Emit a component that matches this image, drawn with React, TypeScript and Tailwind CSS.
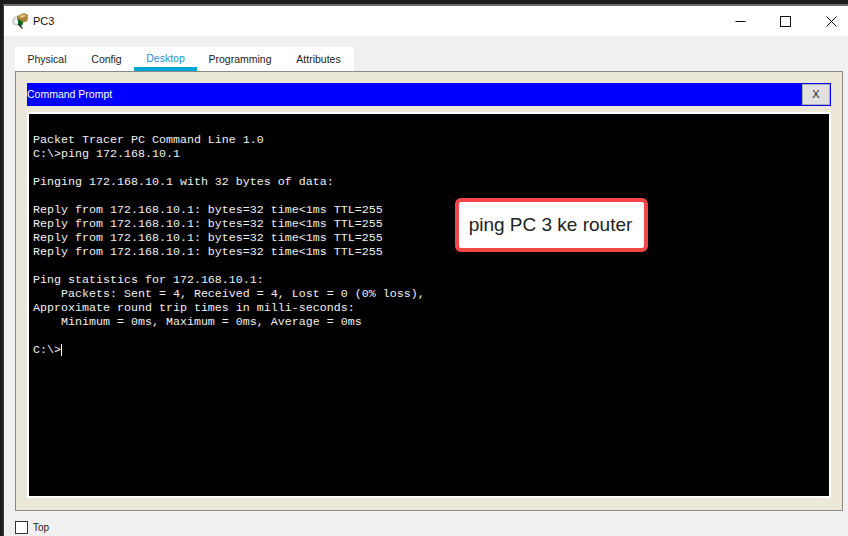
const lines = [
  "Packet Tracer PC Command Line 1.0",
  "C:\\>ping 172.168.10.1",
  " ",
  "Pinging 172.168.10.1 with 32 bytes of data:",
  " ",
  "Reply from 172.168.10.1: bytes=32 time<1ms TTL=255",
  "Reply from 172.168.10.1: bytes=32 time<1ms TTL=255",
  "Reply from 172.168.10.1: bytes=32 time<1ms TTL=255",
  "Reply from 172.168.10.1: bytes=32 time<1ms TTL=255",
  " ",
  "Ping statistics for 172.168.10.1:",
  "    Packets: Sent = 4, Received = 4, Lost = 0 (0% loss),",
  "Approximate round trip times in milli-seconds:",
  "    Minimum = 0ms, Maximum = 0ms, Average = 0ms",
  " ",
];

const tabs = [
  { name: "Physical", w: "w-[64px]" },
  { name: "Config", w: "w-[55px]" },
  { name: "Desktop", w: "w-[63px]", active: true },
  { name: "Programming", w: "w-[86px]" },
  { name: "Attributes", w: "w-[71px]" },
];

export default function App() {
  return (
    <div className="w-[848px] h-[536px] overflow-hidden bg-[#1c1c1c] pt-[3px] pl-[3px] font-['Liberation_Sans',sans-serif]">
      <div className="h-[533px] bg-[#f0f0f0] border-t-2 border-t-[#6e6e6e] border-l border-l-[#3a3a3a] mt-[1px] flex flex-col">
        <div className="h-[30px] shrink-0 bg-white flex items-center">
          <svg width="16" height="16" viewBox="0 0 16 16" className="ml-[8px]">
            <ellipse cx="4" cy="8" rx="3.8" ry="4.5" fill="#c9cdc9" />
            <ellipse cx="4.5" cy="8" rx="2.2" ry="3" fill="#f4f4f4" />
            <path d="M5 3 L12 0 L16 2 L15.5 8 L10 10 L5 7 Z" fill="#a8843e" />
            <path d="M7 3 L12 1.5 L14 3 L10 5 Z" fill="#e4c878" />
            <path d="M6 6 L10.5 8.5 L11 11 L8.5 14 L6 11 Z" fill="#0c6a1c" />
            <path d="M6 11 L10.5 15.5" stroke="#2a2a2a" strokeWidth="1.3" />
          </svg>
          <span className="ml-[5px] text-[11px] text-[#111]">PC3</span>
          <div className="ml-auto flex items-center">
            <svg width="11" height="11" viewBox="0 0 11 11" className="mr-[34px]"><path d="M0.5 5.5H10.5" stroke="#111" /></svg>
            <svg width="11" height="11" viewBox="0 0 11 11" className="mr-[35px]"><rect x="0.5" y="0.5" width="10" height="10" fill="none" stroke="#111" /></svg>
            <svg width="11" height="11" viewBox="0 0 11 11" className="mr-[11px]"><path d="M0.5 0.5L10.5 10.5M10.5 0.5L0.5 10.5" stroke="#111" /></svg>
          </div>
        </div>
        <div className="flex flex-col pl-[11px] pr-[5px]">
          <div className="h-[24px] mt-[11px] flex self-start bg-white w-[339px]">
            {tabs.map((t) => (
              <div
                key={t.name}
                className={`${t.w} flex items-center justify-center text-[10.5px] ${t.active ? "text-[#1b94c9] border-b-[4px] border-b-[#00a4d6] pt-[4px]" : "text-[#222] pt-[1px]"}`}
              >
                {t.name}
              </div>
            ))}
          </div>
          <div className="h-[440px] bg-[#ebe8d9] border border-[#8a8a8a] px-[11px] pt-[11px]">
            <div className="h-[23px] bg-[#0000ff] flex items-center justify-between pr-[1px]">
              <span className="text-[10.5px] text-white">Command Prompt</span>
              <div className="w-[28px] h-[21px] bg-[#e1e1e1] border border-[#adadad] flex items-center justify-center text-[11px] text-[#222]">X</div>
            </div>
            <div className="mt-[6px] h-[386px] bg-white p-[2px]">
              <div className="h-full bg-black pt-[19px] pl-[4px] font-['Liberation_Mono',monospace] text-[11.67px] leading-[14px] text-[#f0f0f0] relative whitespace-pre">
                {lines.map((l, i) => (
                  <div key={i} className="h-[14px]">{l}</div>
                ))}
                <div className="h-[14px] flex items-center">
                  <span>C:\&gt;</span>
                  <span className="w-px h-[12px] bg-white" />
                </div>
                <div className="absolute left-[426px] top-[84px] w-[193px] h-[54px] bg-white border-[4px] border-[#f44848] rounded-[6px] flex items-center justify-center pr-[2px] font-['Liberation_Sans',sans-serif] text-[19px] text-[#222]">
                  ping PC 3 ke router
                </div>
              </div>
            </div>
          </div>
          <div className="flex items-center mt-[9px]">
            <div className="w-[13px] h-[13px] bg-white border border-[#333]" />
            <span className="ml-[5px] text-[10px] text-[#222]">Top</span>
          </div>
        </div>
      </div>
    </div>
  );
}
